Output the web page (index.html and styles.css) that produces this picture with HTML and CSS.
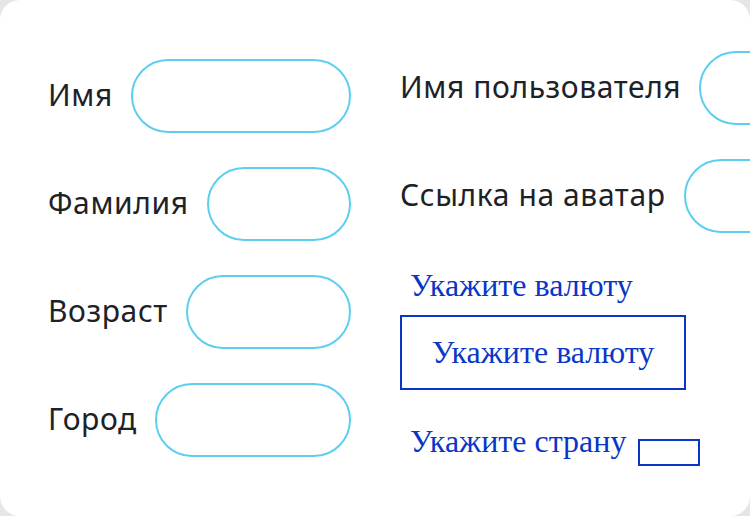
FILE: index.html
```html
<!DOCTYPE html>
<html lang="ru">
<head>
<meta charset="utf-8">
<title>Профиль</title>
<link rel="stylesheet" href="styles.css">
</head>
<body>
<main class="card">
  <section class="col col-left">
    <div class="row"><span class="label">Имя</span><span class="field"></span></div>
    <div class="row"><span class="label">Фамилия</span><span class="field"></span></div>
    <div class="row"><span class="label">Возраст</span><span class="field"></span></div>
    <div class="row"><span class="label">Город</span><span class="field"></span></div>
  </section>
  <section class="col col-right">
    <div class="row row-wide"><span class="label">Имя пользователя</span><span class="field field-fixed"></span></div>
    <div class="row row-wide"><span class="label">Ссылка на аватар</span><span class="field field-fixed"></span></div>
    <div class="serif-label">Укажите валюту</div>
    <div class="select-box">Укажите валюту</div>
    <div class="country-row">
      <span class="serif-label serif-inline">Укажите страну</span>
      <span class="mini-box"></span>
    </div>
  </section>
</main>
</body>
</html>
```
FILE: styles.css
```css
html, body {
  margin: 0;
  padding: 0;
  background: #e6e6e6;
}
.card {
  width: 750px;
  height: 516px;
  box-sizing: border-box;
  background: #ffffff;
  border-radius: 20px;
  overflow: hidden;
  display: flex;
  align-items: center;
  padding-left: 48px;
  gap: 49px;
}
.col {
  display: flex;
  flex-direction: column;
  flex-shrink: 0;
}
.col-left {
  width: 303px;
  gap: 34px;
}
.col-right {
  width: 400px;
}
.row {
  display: flex;
  align-items: center;
  gap: 18px;
  height: 74px;
}
.row-wide {
  margin-bottom: 34px;
}
.label {
  font-family: "Noto Sans", sans-serif;
  font-size: 30px;
  letter-spacing: 0.6px;
  color: #1d2227;
  white-space: nowrap;
  margin-top: -3px;
}
.field {
  flex: 1;
  height: 74px;
  box-sizing: border-box;
  border: 2px solid #5ccff1;
  border-radius: 37px;
}
.field-fixed {
  flex: 0 0 200px;
}
.serif-label {
  font-family: "Liberation Serif", serif;
  font-size: 32px;
  line-height: 36px;
  color: #0a36c8;
  padding-left: 10px;
  margin-bottom: 12px;
  white-space: nowrap;
}
.select-box {
  width: 286px;
  height: 75px;
  box-sizing: border-box;
  border: 2px solid #0a36c8;
  display: flex;
  align-items: center;
  justify-content: center;
  font-family: "Liberation Serif", serif;
  font-size: 32px;
  color: #0a36c8;
  margin-bottom: 33px;
}
.country-row {
  display: flex;
  align-items: flex-start;
}
.serif-inline {
  margin-bottom: 0;
}
.mini-box {
  width: 62px;
  height: 27px;
  box-sizing: border-box;
  border: 2px solid #0a36c8;
  margin-top: 16px;
  margin-left: 12px;
}
```
